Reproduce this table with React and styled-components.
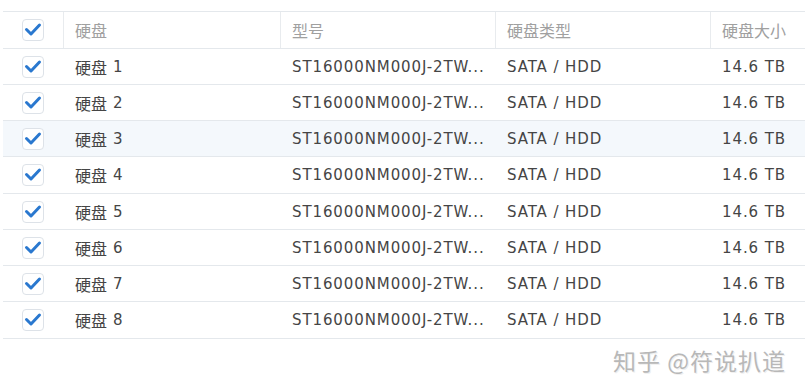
import React from "react";
import styled, { createGlobalStyle } from "styled-components";

const Global = createGlobalStyle`
  html, body { margin: 0; padding: 0; background: #fff; }
  body { font-family: "DejaVu Sans", "Noto Sans CJK SC", sans-serif; }
`;

const Page = styled.div`
  width: 805px;
  height: 386px;
  padding: 11px 0 0 3px;
  box-sizing: border-box;
  overflow: hidden;
  display: flex;
  flex-direction: column;
`;

const Table = styled.div`
  display: flex;
  flex-direction: column;
  width: 802px;
`;

const cols = "60px 217px 215px 215px 95px";

const HeaderRow = styled.div`
  display: grid;
  grid-template-columns: ${cols};
  height: 38px;
  box-sizing: border-box;
  border-top: 1px solid #e4e8ec;
  border-bottom: 1px solid #e4e8ec;
`;

const HeadCell = styled.div`
  display: flex;
  align-items: center;
  justify-content: ${(p) => (p.$center ? "center" : "flex-start")};
  padding-left: ${(p) => (p.$center ? "0" : "11px")};
  border-left: ${(p) => (p.$first ? "none" : "1px solid #e8ebee")};
  color: #a0a0a0;
  font-size: 16px;
  font-family: "Noto Sans CJK SC", "DejaVu Sans", sans-serif;
  white-space: nowrap;
`;

const Row = styled.div`
  display: grid;
  grid-template-columns: ${cols};
  height: ${(p) => (p.$tall ? "37px" : "36px")};
  box-sizing: border-box;
  border-bottom: 1px solid #e4e8ec;
  background: ${(p) => (p.$active ? "#f4f8fc" : "#fff")};
`;

const Cell = styled.div`
  display: flex;
  align-items: center;
  justify-content: ${(p) => (p.$center ? "center" : "flex-start")};
  padding-left: ${(p) => (p.$center ? "0" : "12px")};
  color: #454545;
  font-size: 15px;
  letter-spacing: 0.9px;
  white-space: nowrap;
  overflow: hidden;
`;

const Cjk = styled.span`
  font-family: "Noto Sans CJK SC", sans-serif;
  font-size: 16px;
  letter-spacing: 0;
  margin-right: 6px;
`;

const Box = styled.div`
  width: 22px;
  height: 22px;
  box-sizing: border-box;
  border: 1px solid #dde2e8;
  border-radius: 4px;
  background: #fff;
  display: flex;
  align-items: center;
  justify-content: center;
`;

const Footer = styled.div`
  display: flex;
  justify-content: flex-end;
  padding: 4px 19px 0 0;
`;

const Watermark = styled.div`
  font-family: "Noto Sans CJK SC", sans-serif;
  font-size: 23px;
  color: #b8b8b8;
  letter-spacing: 1px;
  text-shadow: 0 0 2px #fff, 1px 1px 0 #ececec;
`;

function Check() {
  return (
    <Box>
      <svg width="20" height="20" viewBox="0 0 20 20">
        <polyline
          points="3.5,9.5 8,14 16.5,5"
          fill="none"
          stroke="#2a78cf"
          strokeWidth="3"
          strokeLinecap="round"
          strokeLinejoin="round"
        />
      </svg>
    </Box>
  );
}

const disks = [1, 2, 3, 4, 5, 6, 7, 8];

export default function App() {
  return (
    <>
      <Global />
      <Page>
        <Table>
          <HeaderRow>
            <HeadCell $first $center>
              <Check />
            </HeadCell>
            <HeadCell>硬盘</HeadCell>
            <HeadCell>型号</HeadCell>
            <HeadCell>硬盘类型</HeadCell>
            <HeadCell>硬盘大小</HeadCell>
          </HeaderRow>
          {disks.map((n) => (
            <Row key={n} $active={n === 3} $tall={n === 4 || n === 8}>
              <Cell $center>
                <Check />
              </Cell>
              <Cell>
                <Cjk>硬盘</Cjk>
                {n}
              </Cell>
              <Cell>ST16000NM000J-2TW...</Cell>
              <Cell>SATA / HDD</Cell>
              <Cell>14.6 TB</Cell>
            </Row>
          ))}
        </Table>
        <Footer>
          <Watermark>知乎 @符说扒道</Watermark>
        </Footer>
      </Page>
    </>
  );
}
